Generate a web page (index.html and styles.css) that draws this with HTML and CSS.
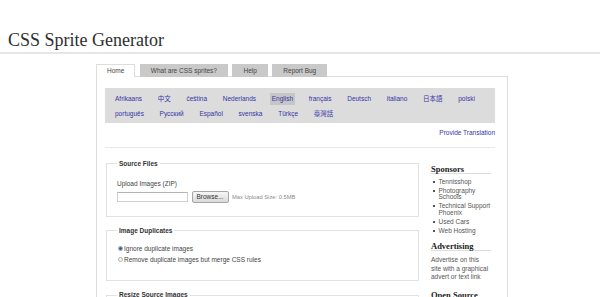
FILE: index.html
```html
<!DOCTYPE html>
<html lang="en">
<head>
  <meta charset="UTF-8" />
  <meta name="viewport" content="width=device-width, initial-scale=1.0" />
  <title>CSS Sprite Generator</title>
  <link rel="stylesheet" href="styles.css">
</head>
<body>

<!-- Header -->
<header class="site-header">
  <h1 class="site-title">CSS Sprite Generator</h1>
</header>

<div class="page">
  <!-- Tabs -->
  <ul class="tabs">
    <li class="tab active">Home</li>
    <li class="tab">What are CSS sprites?</li>
    <li class="tab">Help</li>
    <li class="tab">Report Bug</li>
  </ul>

  <div class="panel">
    <!-- Languages -->
    <div class="languages">
      <a class="lang" href="#">Afrikaans</a>
      <a class="lang" href="#">中文</a>
      <a class="lang" href="#">čeština</a>
      <a class="lang" href="#">Nederlands</a>
      <a class="lang current" href="#">English</a>
      <a class="lang" href="#">français</a>
      <a class="lang" href="#">Deutsch</a>
      <a class="lang" href="#">italiano</a>
      <a class="lang" href="#">日本語</a>
      <a class="lang" href="#">polski</a>
      <a class="lang" href="#">português</a>
      <a class="lang" href="#">Русский</a>
      <a class="lang" href="#">Español</a>
      <a class="lang" href="#">svenska</a>
      <a class="lang" href="#">Türkçe</a>
      <a class="lang" href="#">臺灣話</a>
    </div>
    <p class="translate"><a href="#">Provide Translation</a></p>
    <hr class="divider">

    <div class="columns">
      <!-- Form -->
      <form class="main-col">
        <fieldset class="group">
          <legend>Source Files</legend>
          <p class="field-label">Upload Images (ZIP)</p>
          <div class="upload-row">
            <input class="file-path" type="text">
            <button class="browse-btn" type="button">Browse...</button>
            <span class="hint">Max Upload Size: 0.5MB</span>
          </div>
        </fieldset>

        <fieldset class="group">
          <legend>Image Duplicates</legend>
          <label class="option"><input type="radio" name="dupes" checked> Ignore duplicate images</label>
          <label class="option"><input type="radio" name="dupes"> Remove duplicate images but merge CSS rules</label>
        </fieldset>

        <fieldset class="group">
          <legend>Resize Source Images</legend>
          <label class="option"><input type="radio" name="resize" checked> Don't resize images</label>
        </fieldset>
      </form>

      <!-- Sidebar -->
      <aside class="sidebar">
        <h3 class="side-title">Sponsors</h3>
        <ul class="side-list">
          <li>Tennisshop</li>
          <li>Photography Schools</li>
          <li>Technical Support Phoenix</li>
          <li>Used Cars</li>
          <li>Web Hosting</li>
        </ul>
        <h3 class="side-title">Advertising</h3>
        <p class="side-text">Advertise on this site with a graphical advert or text link</p>
        <h3 class="side-title">Open Source</h3>
        <p class="side-text">This tool is open source.</p>
      </aside>
    </div>
  </div>
</div>

</body>
</html>
```

FILE: styles.css
```css
/* General Styling */
body {
  font-family: "Liberation Sans", Arial, "Noto Sans CJK SC", sans-serif;
  font-size: 6.5px;
  color: #444444;
  background-color: #ffffff;
  margin: 0;
}

a {
  color: #3636a5;
  text-decoration: none;
}

/* Header */
.site-header {
  padding: 30px 8px 2px;
  border-bottom: 2px solid #e6e6e6;
}

.site-title {
  margin: 0;
  font-family: "Liberation Serif", Georgia, serif;
  font-size: 18px;
  font-weight: normal;
  line-height: 20px;
  color: #2e2e2e;
}

/* Tabs */
.page {
  margin-left: 96px;
  width: 412px;
}

.tabs {
  display: flex;
  list-style: none;
  margin: 10px 0 -1px;
  padding: 0;
}

.tab {
  line-height: 10px;
  padding: 1px 10px 0;
  margin-right: 4.5px;
  background-color: #c9c9c9;
  border: 1px solid #c9c9c9;
  border-bottom: none;
  color: #444444;
}

.tab.active {
  position: relative;
  z-index: 1;
  background-color: #ffffff;
  border-color: #dddddd;
  padding-bottom: 1px;
}

/* Panel */
.panel {
  border: 1px solid #dddddd;
  border-bottom: none;
  padding: 11px 12px 0 8px;
  min-height: 400px;
}

.languages {
  display: flex;
  flex-wrap: wrap;
  row-gap: 3px;
  background-color: #dcdcdc;
  padding: 5px 0 3px 8px;
}

.lang {
  line-height: 8px;
  padding: 2px;
  margin-right: 11.7px;
  font-family: "Liberation Sans", Arial, "Noto Sans CJK SC", sans-serif;
}

.lang.current {
  background-color: #c6c6c6;
}

.translate {
  margin: 6px 0 0;
  line-height: 8px;
  text-align: right;
}

.divider {
  border: none;
  border-top: 1px solid #e8e8e8;
  margin: 10px 0 0;
}

/* Columns */
.columns {
  display: flex;
  gap: 12px;
  padding-left: 1px;
}

.main-col {
  width: 313px;
  padding-top: 11.5px;
  margin: 0;
}

.group {
  margin: 0 0 10px;
  padding: 0 10px 13px;
  border: 1px solid #e2e2e2;
  min-width: 0;
}

.group legend {
  font-weight: bold;
  line-height: 8px;
  padding: 0 2px;
  color: #333333;
}

.field-label {
  margin: 12.3px 0 0;
  line-height: 8px;
}

.upload-row {
  display: flex;
  align-items: center;
  margin-top: 3px;
}

.file-path {
  width: 71px;
  height: 10px;
  box-sizing: border-box;
  margin: 0;
  padding: 0;
  border: 1px solid #cfcfcf;
  border-top-color: #b5b5b5;
}

.browse-btn {
  width: 37px;
  height: 12px;
  margin: 0 0 0 3.5px;
  padding: 0;
  font-family: "Liberation Sans", Arial, sans-serif;
  font-size: 6.5px;
  color: #333333;
  background: linear-gradient(#f6f6f6, #dadada);
  border: 1px solid #a6a6a6;
  border-radius: 2px;
}

.hint {
  margin-left: 3.5px;
  font-size: 5.75px;
  color: #8a8a8a;
}

.option {
  display: flex;
  align-items: center;
  line-height: 8px;
  margin-top: 3px;
}

.option:first-of-type {
  margin-top: 10px;
}

.group:nth-of-type(2) {
  padding-bottom: 16.5px;
}

.option input {
  appearance: none;
  width: 5px;
  height: 5px;
  margin: 0 1.5px 0 0.5px;
  border: 1px solid #b0b0b0;
  border-radius: 50%;
  background-color: #f4f4f4;
}

.option input:checked {
  background: radial-gradient(circle, #2f4f86 40%, #9fb2d2 75%);
  border-color: #8a99b3;
}

/* Sidebar */
.sidebar {
  width: 62px;
  padding-top: 9px;
}

.side-title {
  margin: 7.5px 0 0;
  width: 60px;
  font-family: "Liberation Serif", Georgia, serif;
  font-size: 8.5px;
  line-height: 8px;
  color: #222222;
  border-bottom: 1px solid #dddddd;
}

.side-list {
  list-style: none;
  margin: 5.2px 0 0;
  padding: 0;
}

.side-list li {
  display: flex;
  line-height: 6.5px;
  margin-bottom: 2.5px;
  color: #555555;
}

.side-list li::before {
  content: '';
  flex: none;
  width: 2px;
  height: 2px;
  margin: 2.25px 4px 0 1.5px;
  background-color: #555555;
}

.side-text {
  margin: 5.8px 0 10px;
  width: 58.5px;
  line-height: 8.3px;
  color: #555555;
}
```
